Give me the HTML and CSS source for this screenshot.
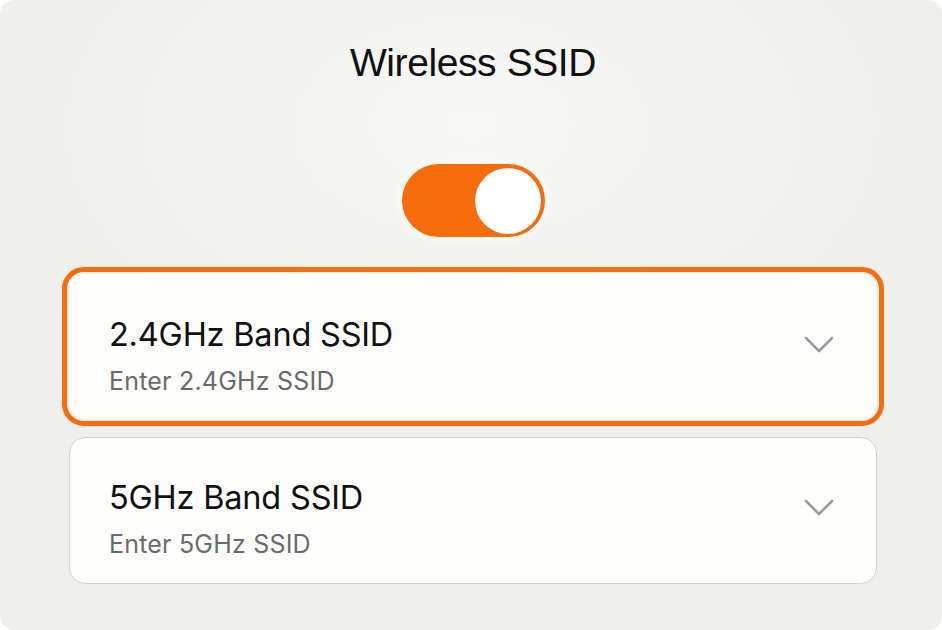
FILE: index.html
```html
<!DOCTYPE html>
<html lang="en">
<head>
    <meta charset="UTF-8">
    <meta name="viewport" content="width=device-width, initial-scale=1.0">
    <title>Wireless SSID</title>
    <link rel="stylesheet" href="styles.css">
</head>
<body>
    <div class="frame">
        <h1 class="title">Wireless SSID</h1>

        <div class="toggle on">
            <span class="knob"></span>
        </div>

        <div class="bands">
            <div class="band active">
                <div class="band-text">
                    <div class="band-name">2.4GHz Band SSID</div>
                    <div class="band-hint">Enter 2.4GHz SSID</div>
                </div>
                <svg class="chevron" width="30" height="18" viewBox="0 0 30 18">
                    <polyline points="2,2 15,15 28,2" fill="none" stroke="#9b9b9b" stroke-width="2.6" stroke-linecap="round" stroke-linejoin="round"/>
                </svg>
            </div>

            <div class="band">
                <div class="band-text">
                    <div class="band-name">5GHz Band SSID</div>
                    <div class="band-hint">Enter 5GHz SSID</div>
                </div>
                <svg class="chevron" width="30" height="18" viewBox="0 0 30 18">
                    <polyline points="2,2 15,15 28,2" fill="none" stroke="#9b9b9b" stroke-width="2.6" stroke-linecap="round" stroke-linejoin="round"/>
                </svg>
            </div>
        </div>
    </div>
</body>
</html>
```

FILE: styles.css
```css
body {
    margin: 0;
    background: #ffffff;
    font-family: Inter, 'Noto Sans', sans-serif;
}
.frame {
    height: 630px;
    box-sizing: border-box;
    padding: 40px 0 0 4px;
    border-radius: 14px;
    background: radial-gradient(ellipse 420px 260px at 50% 20%, #f8f8f6 0%, #efefec 100%);
    display: flex;
    flex-direction: column;
    align-items: center;
}
.title {
    margin: 0;
    font-family: 'Liberation Sans', Arial, sans-serif;
    font-weight: 400;
    font-size: 39px;
    line-height: 46px;
    letter-spacing: -0.4px;
    color: #111;
}
.toggle {
    margin-top: 78px;
    width: 143px;
    height: 73px;
    box-sizing: border-box;
    padding: 3px 4px;
    border-radius: 37px;
    background: #f76c0c;
    display: flex;
    justify-content: flex-end;
    align-items: center;
    box-shadow: 0 0 14px rgba(255, 255, 255, 0.9);
}
.knob {
    width: 66px;
    height: 66px;
    border-radius: 50%;
    background: #ffffff;
}
.bands {
    margin-top: 37px;
    width: 808px;
    display: flex;
    flex-direction: column;
    gap: 18px;
}
.band {
    height: 147px;
    box-sizing: border-box;
    padding: 41px 42px 0 39px;
    background: #fdfdfc;
    border: 1px solid #d2d2d0;
    border-radius: 16px;
    display: flex;
    align-items: flex-start;
    justify-content: space-between;
}
.band.active {
    height: 145px;
    border-color: transparent;
    outline: 5px solid #f76c0c;
    outline-offset: 2px;
    border-radius: 15px;
}
.band-name {
    font-size: 32.5px;
    line-height: 38px;
    color: #111;
    letter-spacing: -0.2px;
}
.band-hint {
    margin-top: 12px;
    font-size: 25px;
    line-height: 30px;
    letter-spacing: 0.2px;
    color: #6b6b6b;
}
.chevron {
    margin-top: 20px;
}
```
